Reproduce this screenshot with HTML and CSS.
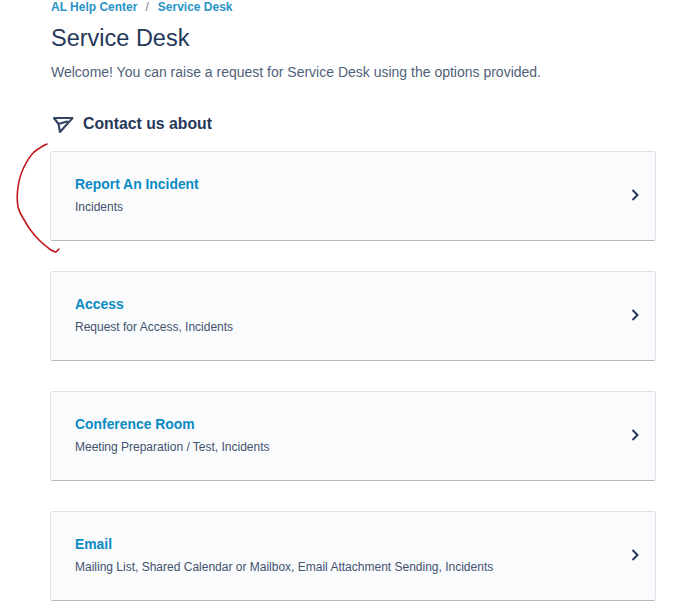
FILE: index.html
```html
<!DOCTYPE html>
<html lang="en">
<head>
<meta charset="utf-8">
<title>Service Desk</title>
<link rel="stylesheet" href="styles.css">
</head>
<body>
<main class="page">
  <nav class="crumbs"><a>AL Help Center</a><span class="sep">/</span><a>Service Desk</a></nav>
  <h1 class="title">Service Desk</h1>
  <p class="intro">Welcome! You can raise a request for Service Desk using the options provided.</p>
  <h2 class="section">
    <svg class="send" width="22" height="18" viewBox="0 0 22 18"><path d="M2 2 L20.5 2 L8 16 L6.5 8 Z M6.5 8 L15 5.5" fill="none" stroke="#344563" stroke-width="2.1" stroke-linejoin="round" stroke-linecap="round"/></svg>
    Contact us about
  </h2>
  <section class="cards">
    <a class="card">
      <div class="text"><div class="name">Report An Incident</div><div class="desc">Incidents</div></div>
      <svg class="chev" width="8" height="12" viewBox="0 0 8 12"><path d="M1.5 1 L6.5 6 L1.5 11" fill="none" stroke="#253858" stroke-width="2"/></svg>
      <svg class="mark" width="50" height="116" viewBox="0 0 50 116"><path d="M31 2 C26 4 22 7 18 10 C14 14 11 19 8 25 C5 31 3 38 2 45 C1 52 1 59 2 65 C3 69 5 73 7 76 C9 79 11 83 13 86 C16 90 19 94 23 98 C27 102 31 105 35 108 C37 109 38 110 40 110 L43 107" fill="none" stroke="#c0151b" stroke-width="1.6" stroke-linecap="round" stroke-linejoin="round"/></svg>
    </a>
    <a class="card">
      <div class="text"><div class="name">Access</div><div class="desc">Request for Access, Incidents</div></div>
      <svg class="chev" width="8" height="12" viewBox="0 0 8 12"><path d="M1.5 1 L6.5 6 L1.5 11" fill="none" stroke="#253858" stroke-width="2"/></svg>
    </a>
    <a class="card">
      <div class="text"><div class="name">Conference Room</div><div class="desc">Meeting Preparation / Test, Incidents</div></div>
      <svg class="chev" width="8" height="12" viewBox="0 0 8 12"><path d="M1.5 1 L6.5 6 L1.5 11" fill="none" stroke="#253858" stroke-width="2"/></svg>
    </a>
    <a class="card">
      <div class="text"><div class="name">Email</div><div class="desc">Mailing List, Shared Calendar or Mailbox, Email Attachment Sending, Incidents</div></div>
      <svg class="chev" width="8" height="12" viewBox="0 0 8 12"><path d="M1.5 1 L6.5 6 L1.5 11" fill="none" stroke="#253858" stroke-width="2"/></svg>
    </a>
  </section>
</main>
</body>
</html>
```
FILE: styles.css
```css
html, body { margin: 0; padding: 0; background: #fff; overflow: hidden; }
body { font-family: "Liberation Sans", Arial, sans-serif; color: #253858; height: 612px; }
.page { width: 605px; margin-left: 51px; }
.crumbs { font-size: 12px; font-weight: 700; line-height: 14px; color: #2a94c8; display: flex; gap: 8px; }
.sep { font-weight: 400; color: #6b778c; margin-right: 1px; }
.title { margin: 9px 0 0; font-size: 23.5px; font-weight: 400; line-height: 30px; color: #253858; }
.intro { margin: 9px 0 0; font-size: 14px; line-height: 20px; color: #505f79; }
.section { margin: 30px 0 0; display: flex; align-items: center; font-size: 15.8px; font-weight: 700; line-height: 24px; color: #253858; }
.send { margin: 2px 9px 0 1px; }
.cards { margin: 15px 0 0 -1px; display: flex; flex-direction: column; gap: 30px; }
.card { position: relative; box-sizing: border-box; height: 90px; display: flex; align-items: center; justify-content: space-between; padding: 0 16px 2px 24px; background: #fafbfc; border: 1px solid #dfe1e6; border-bottom: 1px solid #b3bac5; border-radius: 3px; }
.text { margin-bottom: 2px; }
.name { font-size: 13.9px; font-weight: 700; line-height: 20px; color: #0a8ac4; }
.desc { margin-top: 5px; font-size: 12px; line-height: 16px; color: #42526e; }
.mark { position: absolute; left: -35px; top: -10px; }
```
